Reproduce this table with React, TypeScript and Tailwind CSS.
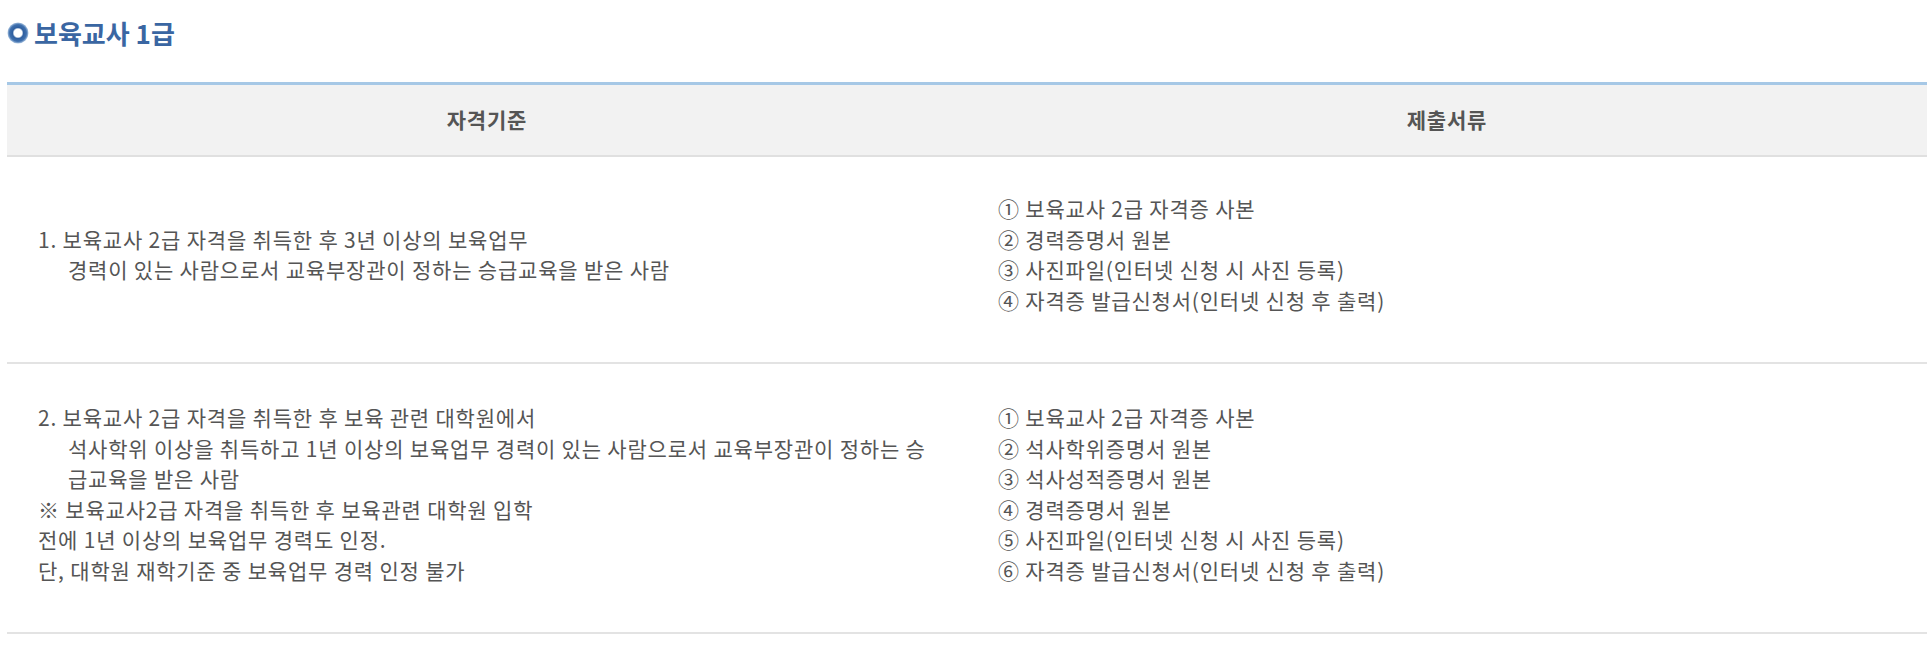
const font = "font-['Noto_Sans_CJK_KR','Noto_Sans',sans-serif]";

function Bullet() {
  return (
    <svg width="22" height="22" viewBox="0 0 22 22" className="shrink-0">
      <defs>
        <radialGradient id="ring" cx="50%" cy="50%" r="50%">
          <stop offset="0%" stopColor="#ffffff" />
          <stop offset="38%" stopColor="#ffffff" />
          <stop offset="52%" stopColor="#2f5f9f" />
          <stop offset="80%" stopColor="#3f70ae" />
          <stop offset="100%" stopColor="#a9c3e0" />
        </radialGradient>
      </defs>
      <circle cx="11" cy="11" r="10.5" fill="url(#ring)" />
    </svg>
  );
}

export default function App() {
  return (
    <div className={`w-[1932px] bg-white pt-[18px] ${font}`}>
      <h2 className="flex items-center gap-[5px] pl-[7px] text-[26px] font-bold leading-[30px] text-[#3a66a2]">
        <Bullet />
        <span>보육교사 1급</span>
      </h2>

      <div className="ml-[7px] mt-[34px] w-[1920px] text-[21px] tracking-[0.8px] text-[#555555]">
        <div className="grid grid-cols-2 border-t-[3px] border-b-2 border-t-[#a6c8e6] border-b-[#e0e0e0] bg-[#f2f2f2] font-bold">
          <div className="flex h-[70px] items-center justify-center">자격기준</div>
          <div className="flex h-[70px] items-center justify-center">제출서류</div>
        </div>

        <div className="grid grid-cols-2 border-b-2 border-[#e3e3e3] leading-[30.5px]">
          <div className="flex items-center pb-[47px] pl-[31px] pr-[30px] pt-[36px]">
            <p className="pl-[30px] -indent-[30px]">
              1. 보육교사 2급 자격을 취득한 후 3년 이상의 보육업무
              <br />
              경력이 있는 사람으로서 교육부장관이 정하는 승급교육을 받은 사람
            </p>
          </div>
          <div className="flex flex-col justify-center pb-[47px] pl-[31px] pt-[36px]">
            <p>① 보육교사 2급 자격증 사본</p>
            <p>② 경력증명서 원본</p>
            <p>③ 사진파일(인터넷 신청 시 사진 등록)</p>
            <p>④ 자격증 발급신청서(인터넷 신청 후 출력)</p>
          </div>
        </div>

        <div className="grid grid-cols-2 border-b-2 border-[#e3e3e3] leading-[30.5px]">
          <div className="flex flex-col justify-center pb-[47px] pl-[31px] pr-[30px] pt-[38px]">
            <p className="pl-[30px] -indent-[30px]">
              2. 보육교사 2급 자격을 취득한 후 보육 관련 대학원에서
              <br />
              석사학위 이상을 취득하고 1년 이상의 보육업무 경력이 있는 사람으로서 교육부장관이 정하는 승급교육을 받은 사람
            </p>
            <p>
              ※ 보육교사2급 자격을 취득한 후 보육관련 대학원 입학
              <br />
              전에 1년 이상의 보육업무 경력도 인정.
              <br />
              단, 대학원 재학기준 중 보육업무 경력 인정 불가
            </p>
          </div>
          <div className="flex flex-col justify-center pb-[47px] pl-[31px] pt-[38px]">
            <p>① 보육교사 2급 자격증 사본</p>
            <p>② 석사학위증명서 원본</p>
            <p>③ 석사성적증명서 원본</p>
            <p>④ 경력증명서 원본</p>
            <p>⑤ 사진파일(인터넷 신청 시 사진 등록)</p>
            <p>⑥ 자격증 발급신청서(인터넷 신청 후 출력)</p>
          </div>
        </div>
      </div>
    </div>
  );
}
